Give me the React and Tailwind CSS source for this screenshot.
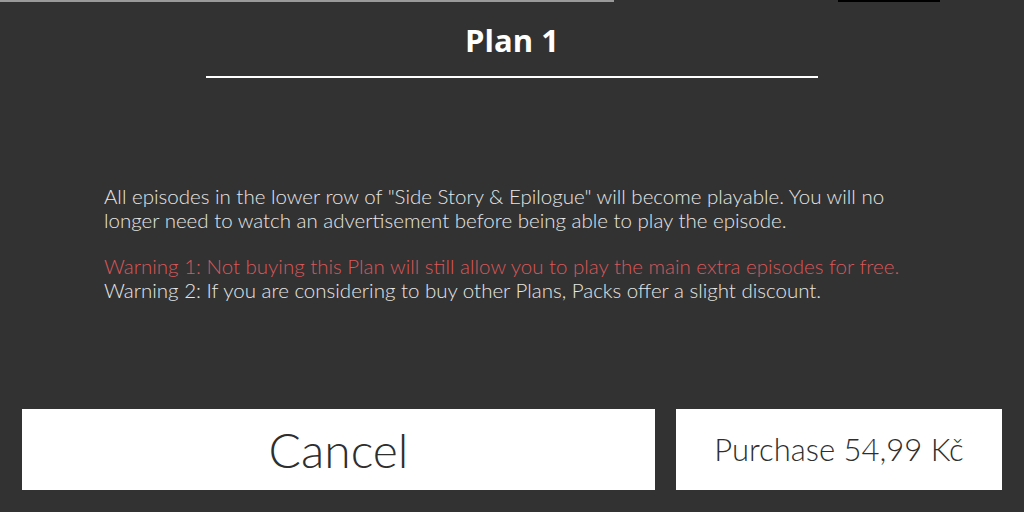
export default function App() {
  return (
    <div className="relative w-[1024px] h-[512px] overflow-hidden bg-[#323232] text-white" style={{ fontFamily: 'Lato, "Liberation Sans", sans-serif' }}>
      {/* thin window edges */}
      <div className="absolute left-0 top-0 h-[2px] w-[614px] bg-[#9a9a9a]" />
      <div className="absolute left-[838px] top-0 h-[2px] w-[102px] bg-black" />

      <div className="flex h-full flex-col">
        <div className="flex flex-col items-center pt-[20px]">
          <h1 className="text-[31px] font-bold leading-[40px]" style={{ fontFamily: '"Open Sans", sans-serif' }}>Plan 1</h1>
          <div className="mt-[16px] h-[2px] w-[612px] bg-white" />
        </div>

        <div className="mt-[106px] pl-[104px] pr-[118px] text-[20.5px] font-light leading-[24px] text-[#e6e6e6]">
          <p>
            All episodes in the lower row of "Side Story &amp; Epilogue" will become playable. You will no longer need to watch an advertisement before being able to play the episode.
          </p>
          <p className="mt-[22px] whitespace-nowrap text-[#d9575a]">Warning 1: Not buying this Plan will still allow you to play the main extra episodes for free.</p>
          <p className="whitespace-nowrap">Warning 2: If you are considering to buy other Plans, Packs offer a slight discount.</p>
        </div>

        <div className="mt-auto mb-[22px] flex gap-[21px] px-[22px]">
          <button className="flex h-[81px] w-[633px] items-center justify-center bg-white text-[48px] font-light text-[#2e2e2e]">Cancel</button>
          <button className="flex h-[81px] w-[326px] items-center justify-center bg-white text-[31px] font-light text-[#2e2e2e]">Purchase 54,99 Kč</button>
        </div>
      </div>
    </div>
  );
}
